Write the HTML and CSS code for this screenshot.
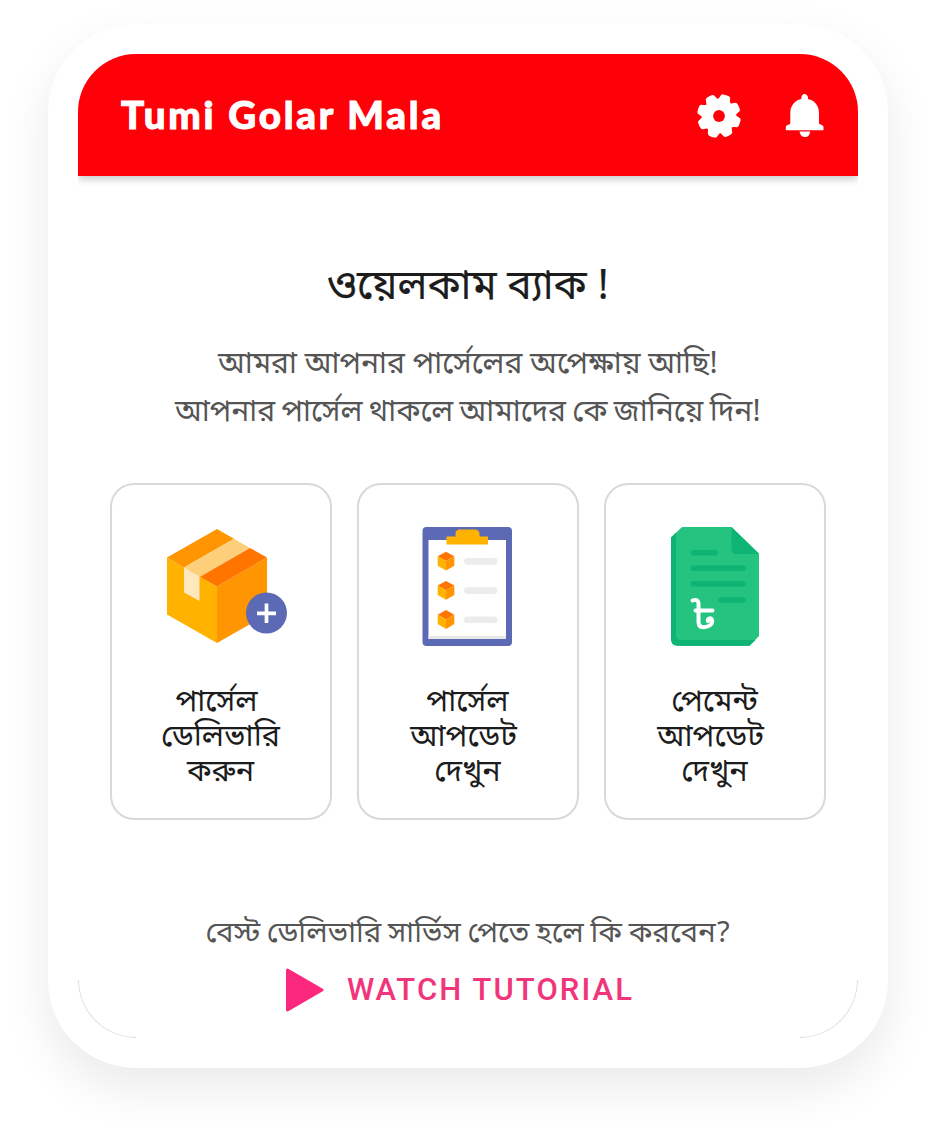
FILE: index.html
```html
<!DOCTYPE html>
<html lang="bn">
<head>
<meta charset="utf-8">
<title>Tumi Golar Mala</title>
<link rel="stylesheet" href="styles.css">
</head>
<body>
<div class="frame">
  <main class="screen">
    <header class="topbar">
      <h1 class="brand">Tumi Golar Mala</h1>
      <svg class="gear" width="44" height="44" viewBox="-22 -22 44 44">
        <defs><mask id="hole"><rect x="-22" y="-22" width="44" height="44" fill="#fff"/><circle r="5.9" fill="#000"/></mask></defs>
        <g mask="url(#hole)"><g fill="#fff" transform="rotate(19)">
          <circle r="16.500"/>
          <path id="tooth" d="M-7.500-14.500Q-5.500-16.500-5.200-19Q-4.900-21.500-3-21.800Q0-22.200 3-21.800Q4.900-21.500 5.200-19Q5.500-16.500 7.500-14.500Z"/>
          <use href="#tooth" transform="rotate(45)"/><use href="#tooth" transform="rotate(90)"/><use href="#tooth" transform="rotate(135)"/><use href="#tooth" transform="rotate(180)"/><use href="#tooth" transform="rotate(225)"/><use href="#tooth" transform="rotate(270)"/><use href="#tooth" transform="rotate(315)"/>
        </g></g>
      </svg>
      <svg class="bell" width="40" height="44" viewBox="0 0 40 44">
        <path fill="#fff" d="M16.300 5V3.500Q17 0 19.500 0Q22.300 0 23 3.500V5C30 6.500 34 12 34 19V29Q34 30.300 35.500 30.500Q38.500 31 38.500 33.500V36.200H.8V33.500Q.8 31 4 30.500Q5.300 30.300 5.300 29V19C5.300 12 9.500 6.500 16.300 5Z"/>
        <path fill="#fff" d="M14.500 37.500H25.200Q24.500 43 20 43Q15.500 43 14.500 37.500Z"/>
      </svg>
    </header>

    <h2 class="welcome">ওয়েলকাম ব্যাক !</h2>
    <p class="intro">আমরা আপনার পার্সেলের অপেক্ষায় আছি!<br><span class="tight">আপনার পার্সেল থাকলে আমাদের কে জানিয়ে দিন!</span></p>

    <section class="cards">
      <article class="card">
        <svg width="134" height="120" viewBox="-10 0 134 120">
          <path fill="#ffb300" d="M3 30.500L53 59.500V116L3 87.500Z"/>
          <path fill="#ff9500" d="M53 59.500L103 30.500V87.500L53 116Z"/>
          <path fill="#ff9500" d="M53 2L3 30.500L20 40.500L70 11.700Z"/>
          <path fill="#fdcf7b" d="M70 11.700L86 21L36 49.700L20 40.500Z"/>
          <path fill="#ff7500" d="M86 21L103 30.500L53 59.500L36 49.700Z"/>
          <path fill="#ffe8bd" d="M20 40.500L35.500 49.500V74L20 65.500Z"/>
          <circle cx="102.500" cy="86" r="20.500" fill="#5c69b5"/>
          <path stroke="#fff" stroke-width="3.700" d="M93 86.300H112M102.500 76.500V96"/>
        </svg>
        <h3 class="label">পার্সেল&nbsp;<br>ডেলিভারি<br>করুন</h3>
      </article>
      <article class="card">
        <svg width="124" height="120" viewBox="1 0 124 120">
          <rect x="17.500" y="0" width="89.500" height="119" rx="4" fill="#5c69b5"/>
          <path fill="#fff" d="M23.500 13H101V112H23.500Z"/>
          <path fill="#e8e8e8" d="M23.500 109H101V112H23.500Z"/>
          <path fill="#ffb300" d="M41.500 9.500H50.500V7Q50.500 2.500 55 2.500H69.500Q74.500 2.500 74.500 7V9.500H83V17.500H41.500Z"/>
          <g id="row">
            <path fill="#ff7500" d="M41 24.700L49.300 29.300L41 34L32.700 29.300Z"/>
            <path fill="#ffb300" d="M32.700 29.300L41 34V43.500L32.700 38.700Z"/>
            <path fill="#ff9500" d="M49.300 29.300L41 34V43.500L49.300 38.700Z"/>
            <rect x="59" y="31" width="33.500" height="6.700" rx="3.350" fill="#ececec"/>
          </g>
          <use href="#row" y="29.200"/><use href="#row" y="58.400"/>
        </svg>
        <h3 class="label">পার্সেল<br>আপডেট&nbsp;<br>দেখুন</h3>
      </article>
      <article class="card">
        <svg width="124" height="120" viewBox="1 0 124 120">
          <path fill="#25c380" d="M30 0H79.500L107 26.500V109L97.500 118.800H25L19 113V10.500Z"/>
          <path fill="#0db473" d="M24 5.500V108Q24 113 29 113H103.500L97.500 118.800H25Q19 118.500 19 112.500V10.500Z"/>
          <path fill="#0db473" d="M79.500 0L107 27H84.500Q79.500 27 79.500 22Z"/>
          <path stroke="#0db473" stroke-width="5.600" stroke-linecap="round" d="M41.500 25.800H63M41.500 41.300H91M41.500 56.700H91M69 73H91"/>
          <path fill="none" stroke="#fff" stroke-width="4" stroke-linecap="round" stroke-linejoin="round" d="M40.500 73.500Q45.500 71.500 46.500 76V95.500Q47 100.500 52 100.300C57.500 100 61 96.500 60 93C59 90.300 55 91 56 94M43.500 83.500H60.500"/>
        </svg>
        <h3 class="label">পেমেন্ট<br>আপডেট&nbsp;<br>দেখুন</h3>
      </article>
    </section>

    <p class="question">বেস্ট ডেলিভারি সার্ভিস পেতে হলে কি করবেন?</p>
    <a class="tutorial">
      <svg width="40" height="44" viewBox="0 0 40 44"><path fill="#fb287d" stroke="#fb287d" stroke-width="3" stroke-linejoin="round" d="M2.500 2L37 22L2.500 42Z"/></svg>
      <span>WATCH TUTORIAL</span>
    </a>
    <i class="corner left"></i><i class="corner right"></i>
  </main>
</div>
</body>
</html>
```
FILE: styles.css
```css
* { box-sizing: border-box; margin: 0; padding: 0; }
body {
  background: #fff;
  width: 936px;
  height: 1140px;
  padding: 24px 48px 0;
  overflow: hidden;
  font-family: "Noto Sans Bengali", "Noto Sans", sans-serif;
}
.frame {
  width: 840px;
  height: 1044px;
  padding: 30px;
  border-radius: 88px;
  background: #fff;
  box-shadow: 0 20px 50px rgba(0, 0, 0, .085);
}
.screen {
  position: relative;
  width: 780px;
  height: 984px;
  border-radius: 58px;
  overflow: hidden;
  background: #fff;
  display: flex;
  flex-direction: column;
  align-items: center;
}
.topbar {
  width: 100%;
  height: 122px;
  flex: none;
  display: flex;
  align-items: center;
  padding: 1px 33px 0 43px;
  background: #ff0008;
  box-shadow: 0 3px 8px rgba(0, 0, 0, .22);
}
.brand {
  flex: 1;
  padding-bottom: 4px;
  color: #fff;
  font: 900 38.5px/50px Lato, sans-serif;
  letter-spacing: 2.8px;
  -webkit-text-stroke: 1px #fff;
}
.bell { margin-left: 44px; }
.welcome {
  margin-top: 83px;
  font-weight: 400;
  font-size: 41px;
  line-height: 60px;
  color: #1c1c1c;
  -webkit-text-stroke: .2px #1c1c1c;
}
.intro {
  margin-top: 22px;
  font-size: 30px;
  line-height: 48px;
  text-align: center;
  color: #555;
}
.tight { word-spacing: -1.4px; }
.cards {
  margin-top: 46px;
  display: grid;
  grid-template-columns: repeat(3, 222px);
  gap: 25px;
}
.card {
  height: 337px;
  padding-top: 42px;
  border: 2px solid #d9d9d9;
  border-radius: 24px;
  display: flex;
  flex-direction: column;
  align-items: center;
}
.label {
  margin-top: 39px;
  padding-right: 1px;
  font-weight: 400;
  font-size: 30.5px;
  line-height: 35px;
  text-align: center;
  color: #1c1c1c;
}
.question {
  margin-top: 91px;
  font-size: 29.4px;
  line-height: 48px;
  word-spacing: -1px;
  color: #555;
}
.tutorial {
  margin-top: 9px;
  padding-right: 17px;
  display: flex;
  align-items: center;
  gap: 22px;
  color: #f1357b;
  font: 500 31px/44px Roboto, sans-serif;
  letter-spacing: 2.1px;
}
.corner {
  position: absolute;
  bottom: 0;
  width: 58px;
  height: 58px;
  border-bottom: 1px solid #ddd;
}
.left { left: 0; border-left: 1px solid #ddd; border-bottom-left-radius: 58px; }
.right { right: 0; border-right: 1px solid #ddd; border-bottom-right-radius: 58px; }
```
